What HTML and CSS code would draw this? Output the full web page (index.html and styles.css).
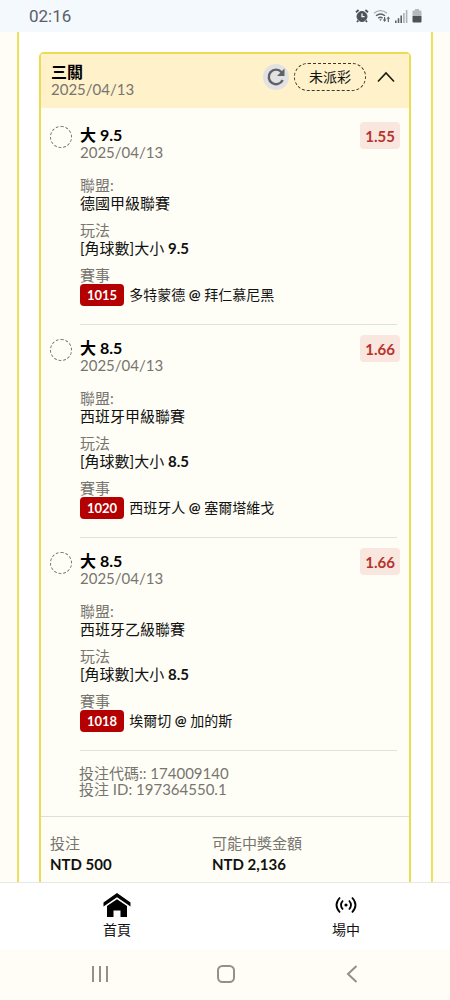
FILE: index.html
```html
<!DOCTYPE html>
<html lang="zh-Hant">
<head>
<meta charset="utf-8">
<meta name="viewport" content="width=device-width, initial-scale=1">
<title>未派彩</title>
<link rel="stylesheet" href="styles.css">
</head>
<body>
<header class="status-bar">
  <time class="clock">02:16</time>
  <div class="status-icons">
    <svg width="14" height="14" viewBox="0 0 14 14" fill="none" stroke="#4c5259"><circle cx="7" cy="7.5" r="5" fill="#4c5259"/><path d="M1 3.2L3.6 1M13 3.2L10.4 1M3.3 11.5L2 13M10.7 11.5L12 13" stroke-width="1.8"/><path d="M7 4.5v3.2h2.6" stroke="#f4f9fe" stroke-width="1.3"/></svg>
    <svg width="18" height="14" viewBox="0 0 18 14" fill="none" stroke="#5b6168" stroke-width="1.4"><path d="M1 4.2Q7.5-1 14 4.2" stroke="#a5abb1"/><path d="M3 6.8Q7.5 3 12 6.8M5.2 9.2Q7.5 7.3 9.6 9.2"/><path d="M6.3 10.3h2.4L7.5 12z" fill="#5b6168" stroke="none"/><path d="M11.6 8v3.5M15.3 13V9.3" stroke-width="1.2"/><path d="M9.8 10.6h3.6l-1.8 2.4zM13.5 9.8h3.6l-1.8-2.4z" fill="#5b6168" stroke="none"/></svg>
    <svg width="13" height="13" viewBox="0 0 13 13"><path fill="#5b6168" d="M0 10.5h1.6V13H0zM2.7 8.3h1.6V13H2.7zM5.4 5.6H7V13H5.4z"/><path fill="#aeb4ba" d="M8.1 3h1.6v10H8.1zM10.8 0h1.6v13h-1.6z"/></svg>
    <svg width="10" height="14" viewBox="0 0 10 14"><path fill="#b4b9be" d="M3 0h4v1.5h1.5q1 0 1 1V7h-9V2.500q0-1 1-1H3z"/><path fill="#4c5259" d="M.5 7h9v5.500q0 1-1 1h-7q-1 0-1-1z"/></svg>
  </div>
</header>

<main class="screen">
  <div class="panel">
    <article class="ticket">
      <header class="ticket-head">
        <div class="ticket-name">
          <h1 class="title">三關</h1>
          <p class="date">2025/04/13</p>
        </div>
        <div class="controls">
          <button class="refresh" type="button" aria-label="重新整理">
            <svg width="20" height="20" viewBox="0 0 20 20"><path d="M15.600 5.200A7.300 7.300 0 1 0 16.700 13" fill="none" stroke="#606267" stroke-width="2.400"/><path d="M18.500 1.500V9H11z" fill="#606267"/></svg>
          </button>
          <span class="state">未派彩</span>
          <button class="collapse" type="button" aria-label="收合">
            <svg width="18" height="12" viewBox="0 0 18 12"><path d="M1 10.500L9 2l8 8.500" fill="none" stroke="#1c1a12" stroke-width="1.600"/></svg>
          </button>
        </div>
      </header>

      <section class="leg">
        <span class="marker"></span>
        <div class="leg-body">
          <div class="leg-head">
            <div><h2 class="title">大 9.5</h2><p class="date">2025/04/13</p></div>
            <span class="odds">1.55</span>
          </div>
          <dl class="facts">
            <div><dt>聯盟:</dt><dd>德國甲級聯賽</dd></div>
            <div><dt>玩法</dt><dd>[角球數]大小 <b>9.5</b></dd></div>
            <div><dt>賽事</dt><dd class="match"><span class="code">1015</span><span>多特蒙德 <b>@</b> 拜仁慕尼黑</span></dd></div>
          </dl>
        </div>
      </section>

      <section class="leg">
        <span class="marker"></span>
        <div class="leg-body">
          <div class="leg-head">
            <div><h2 class="title">大 8.5</h2><p class="date">2025/04/13</p></div>
            <span class="odds">1.66</span>
          </div>
          <dl class="facts">
            <div><dt>聯盟:</dt><dd>西班牙甲級聯賽</dd></div>
            <div><dt>玩法</dt><dd>[角球數]大小 <b>8.5</b></dd></div>
            <div><dt>賽事</dt><dd class="match"><span class="code">1020</span><span>西班牙人 <b>@</b> 塞爾塔維戈</span></dd></div>
          </dl>
        </div>
      </section>

      <section class="leg">
        <span class="marker"></span>
        <div class="leg-body">
          <div class="leg-head">
            <div><h2 class="title">大 8.5</h2><p class="date">2025/04/13</p></div>
            <span class="odds">1.66</span>
          </div>
          <dl class="facts">
            <div><dt>聯盟:</dt><dd>西班牙乙級聯賽</dd></div>
            <div><dt>玩法</dt><dd>[角球數]大小 <b>8.5</b></dd></div>
            <div><dt>賽事</dt><dd class="match"><span class="code">1018</span><span>埃爾切 <b>@</b> 加的斯</span></dd></div>
          </dl>
        </div>
      </section>

      <div class="ids">
        <p>投注代碼:: 174009140</p>
        <p>投注 ID: 197364550.1</p>
      </div>

      <dl class="totals">
        <div><dt>投注</dt><dd>NTD 500</dd></div>
        <div><dt>可能中獎金額</dt><dd>NTD 2,136</dd></div>
      </dl>
    </article>
  </div>
</main>

<nav class="tabs">
  <a class="tab" href="#home">
    <svg width="28" height="24" viewBox="0 0 28 24"><path d="M14 0l13.500 9.500v4L14 4.200.5 13.500v-4z"/><path d="M14 6.300L24 13v11h-6.500v-6.500h-7V24H4V13z"/></svg>
    首頁
  </a>
  <a class="tab" href="#live">
    <svg width="22" height="24" viewBox="0 0 22 24" fill="none" stroke="#000" stroke-width="1.800"><circle cx="11" cy="12" r="1.600" fill="#000" stroke="none"/><path d="M8 7.500q-4 4.500 0 9M14 7.500q4 4.500 0 9M5 4.500q-7 7.500 0 15M17 4.500q7 7.500 0 15"/></svg>
    場中
  </a>
</nav>

<footer class="system-nav">
  <button type="button" aria-label="最近"><svg width="18" height="18" viewBox="0 0 18 18" stroke="#929089" stroke-width="2"><path d="M2 1v16M9 1v16M16 1v16"/></svg></button>
  <button type="button" aria-label="主畫面"><svg width="20" height="20" viewBox="0 0 20 20" fill="none" stroke="#929089" stroke-width="2"><rect x="2" y="2" width="16" height="16" rx="4.500"/></svg></button>
  <button type="button" aria-label="返回"><svg width="18" height="18" viewBox="0 0 18 18" fill="none" stroke="#929089" stroke-width="2"><path d="M13.500 1L5 9l8.500 8"/></svg></button>
</footer>
</body>
</html>
```
FILE: styles.css
```css
* {
  box-sizing: border-box;
  margin: 0;
  padding: 0;
}

body {
  display: flex;
  flex-direction: column;
  height: 100vh;
  background: #fffdf5;
  color: #111;
  font: 15px/18px Lato, "Noto Sans CJK TC", sans-serif;
}

button {
  border: 0;
  background: none;
}

svg {
  display: block;
}

.status-bar {
  display: flex;
  align-items: center;
  justify-content: space-between;
  flex: none;
  height: 32px;
  padding: 0 28px 0 29px;
  background: #f4f9fe;
}

.clock {
  color: #5a6067;
  font: 17px/20px Roboto, sans-serif;
}

.status-icons {
  display: flex;
  align-items: center;
  gap: 4px;
}

.screen {
  flex: 1;
  min-height: 0;
  overflow: hidden;
  padding: 0 17px;
}

.panel {
  padding: 20px 20px 0;
  border: solid #efe05a;
  border-width: 0 2px;
  background: #fff;
}

.ticket {
  border: 2px solid #ebdc54;
  border-radius: 5px;
  background: #fffef6;
}

.ticket-head {
  display: flex;
  align-items: flex-start;
  justify-content: space-between;
  padding: 9px 14px 11px 10px;
  background: #fff1c9;
}

.controls {
  display: flex;
  align-items: center;
}

.title {
  font-size: 16px;
  line-height: 18px;
  font-weight: 700;
  color: #000;
}

.date {
  line-height: 16px;
  color: #777570;
}

.refresh {
  display: grid;
  place-items: center;
  width: 26px;
  height: 26px;
  border-radius: 50%;
  background: #e2e2e3;
}

.state {
  margin: 0 11px 0 5px;
  padding: 4px 14px;
  border: 1px dashed #3c3828;
  border-radius: 14px;
  font-size: 14px;
}

.leg {
  display: flex;
  gap: 8px;
  padding: 14px 9px 0;
}

.leg + .leg {
  padding-top: 10px;
}

.marker {
  flex: none;
  width: 22px;
  height: 22px;
  margin-top: 4px;
  border: 1px dashed #777;
  border-radius: 50%;
}

.leg-body {
  flex: 1;
}

.leg-head {
  display: flex;
  justify-content: space-between;
  padding-top: 4px;
}

.odds {
  align-self: flex-start;
  margin-top: -4px;
  padding: 5px 5px 4px;
  border-radius: 4px;
  background: #f9e6df;
  color: #b5342c;
  font-weight: 700;
}

.facts {
  display: grid;
  gap: 9px;
  margin-right: 3px;
  padding: 16px 0 18px;
  border-bottom: 1px solid #e4e1da;
}

dt {
  color: #777570;
}

.match {
  display: flex;
  align-items: center;
  gap: 5px;
  font-size: 14px;
}

.code {
  padding: 2px 7px;
  border-radius: 4px;
  background: #b40000;
  color: #fff;
  font-size: 13px;
  font-weight: 700;
}

.ids {
  padding: 14px 39px 19px 38px;
  border-bottom: 1px solid #dfddd7;
  color: #777570;
  line-height: 16px;
}

.totals {
  display: grid;
  grid-template-columns: 162px 1fr;
  padding: 17px 9px 20px;
}

.totals dd {
  padding-top: 3px;
  font-weight: 700;
}

.tabs {
  display: flex;
  justify-content: space-between;
  flex: none;
  padding: 10px 90px 10px 103px;
  border-top: 1px solid #e6e8e8;
  background: #fff;
}

.tab {
  display: flex;
  flex-direction: column;
  align-items: center;
  gap: 4px;
  color: #111;
  font-size: 14px;
  text-decoration: none;
}

.system-nav {
  display: flex;
  justify-content: space-between;
  flex: none;
  padding: 15px 89px 16px 91px;
}

.system-nav button {
  display: grid;
  place-items: center;
  height: 20px;
}
```
